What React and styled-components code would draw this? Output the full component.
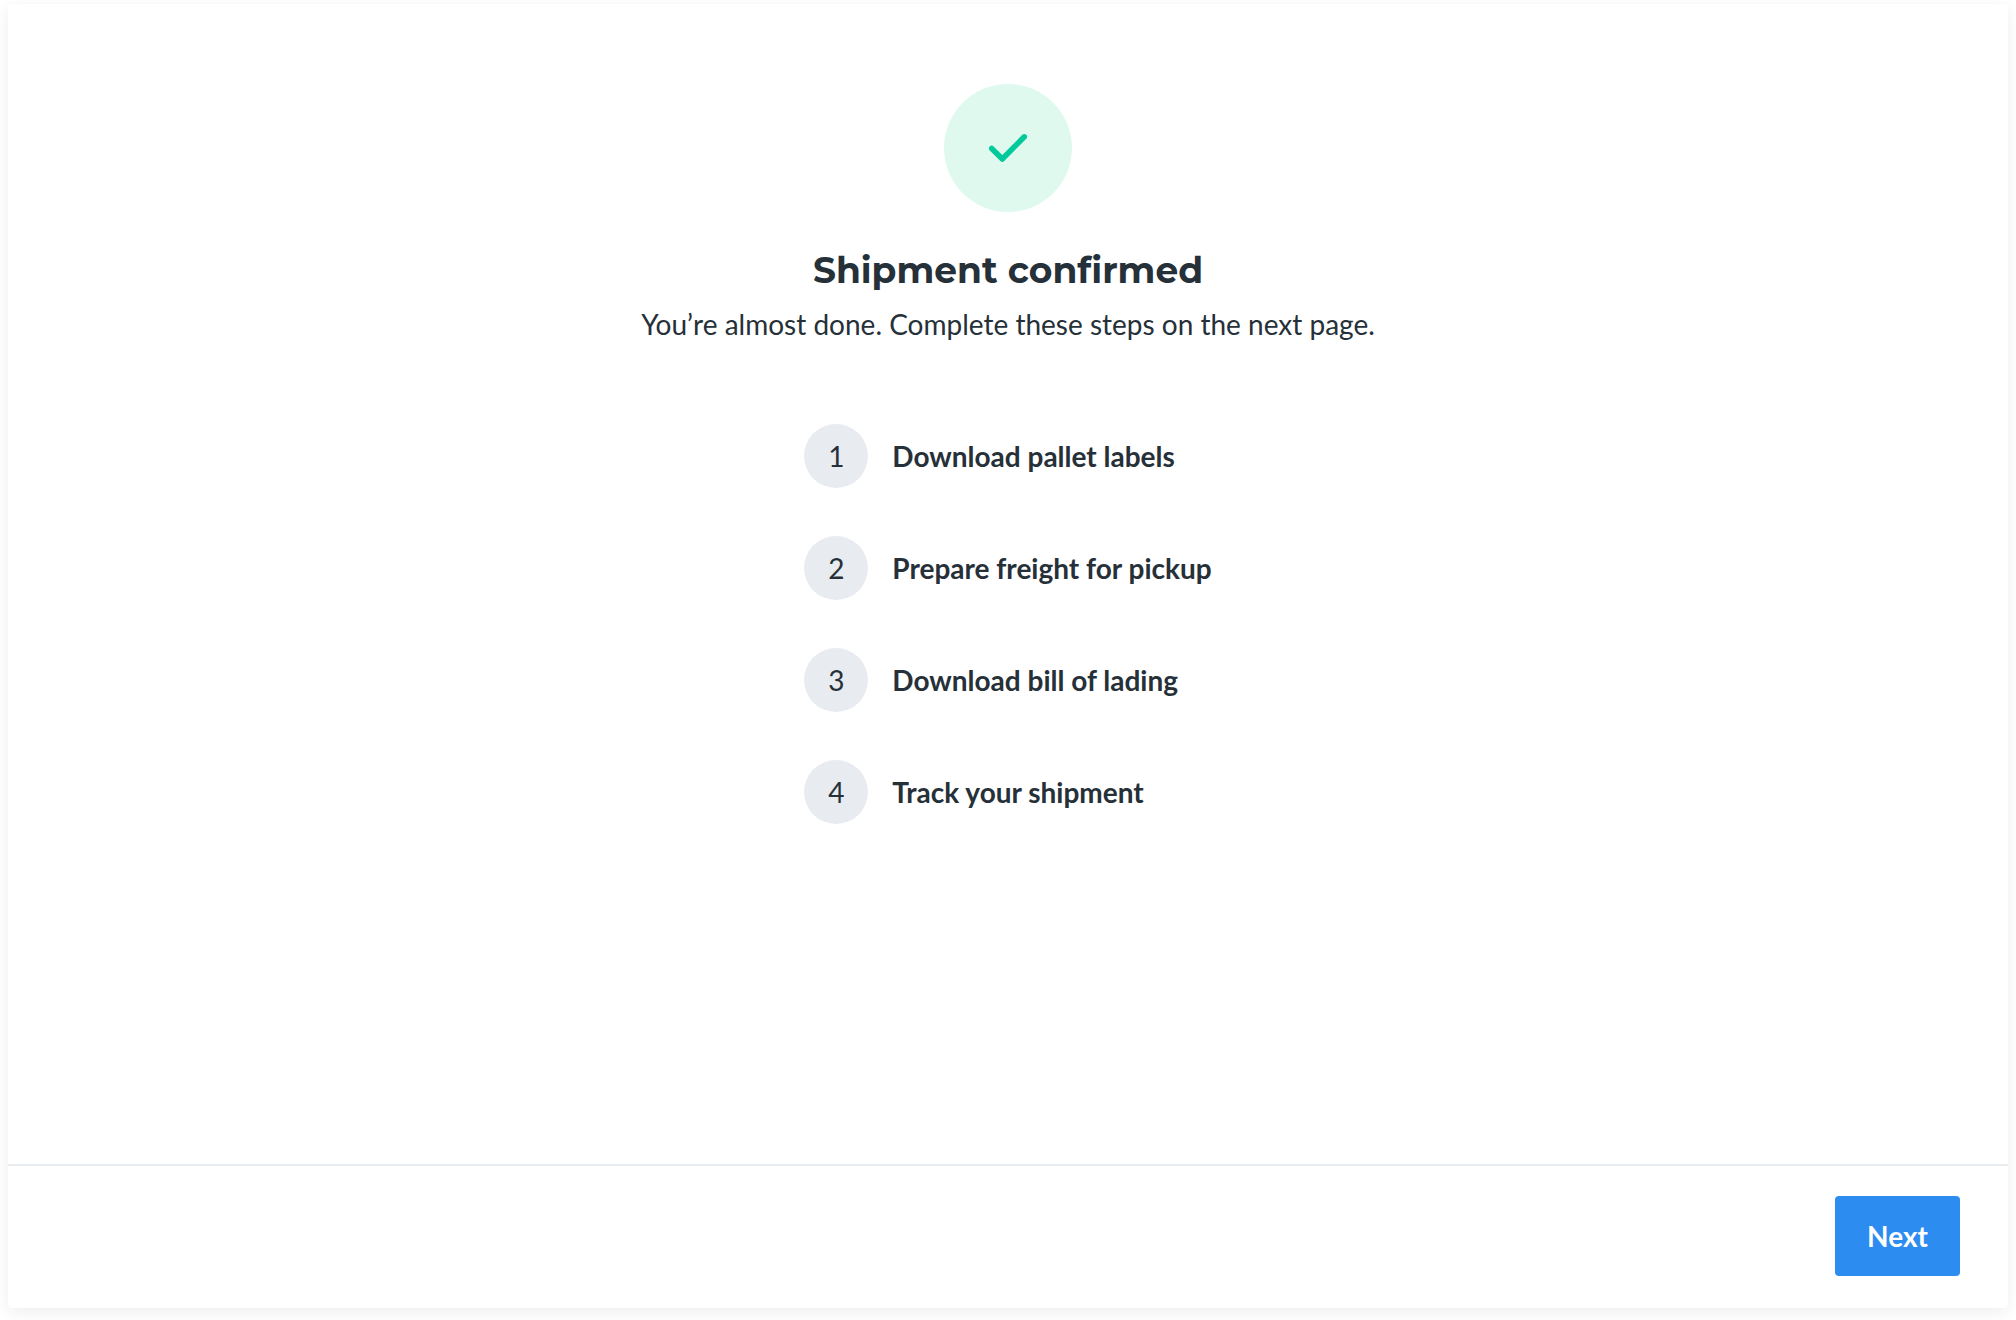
import React from 'react';
import styled, { createGlobalStyle } from 'styled-components';

const GlobalStyle = createGlobalStyle`
  * {
    box-sizing: border-box;
  }

  body {
    margin: 0;
    background-color: #fff;
    color: #263038;
    font-family: Lato, 'Open Sans', sans-serif;
    font-size: 28px;
    line-height: 40px;
    -webkit-font-smoothing: antialiased;
  }
`;

const Page = styled.div`
  display: flex;
  min-height: 100vh;
  padding: 4px 8px 12px;
`;

const Card = styled.main`
  display: flex;
  flex: 1;
  flex-direction: column;
  background-color: #fff;
  border-radius: 4px;
  box-shadow: 0 4px 16px rgba(0, 0, 0, 0.07);
`;

const Content = styled.section`
  display: flex;
  flex: 1;
  flex-direction: column;
  align-items: center;
  padding: 80px 48px;
`;

const SuccessBadge = styled.div`
  display: flex;
  align-items: center;
  justify-content: center;
  width: 128px;
  height: 128px;
  margin-bottom: 32px;
  border-radius: 50%;
  background-color: #dff9ef;
`;

const Title = styled.h1`
  margin: 0 0 8px;
  font-family: Montserrat, Inter, sans-serif;
  font-size: 36px;
  font-weight: 700;
  line-height: 52px;
  text-align: center;
`;

const Subtitle = styled.p`
  margin: 0 0 80px;
  text-align: center;
`;

const StepList = styled.ol`
  display: flex;
  flex-direction: column;
  gap: 48px;
  margin: 0;
  padding: 0;
  list-style: none;
`;

const Step = styled.li`
  display: flex;
  align-items: center;
  gap: 24px;
`;

const StepNumber = styled.span`
  display: flex;
  flex-shrink: 0;
  align-items: center;
  justify-content: center;
  width: 64px;
  height: 64px;
  border-radius: 50%;
  background-color: #e8ebf0;
`;

const StepLabel = styled.span`
  font-weight: 700;
`;

const Footer = styled.footer`
  display: flex;
  justify-content: flex-end;
  padding: 30px 48px 32px;
  border-top: 2px solid #e8edf1;
`;

const NextButton = styled.button`
  padding: 20px 32px;
  border: none;
  border-radius: 4px;
  background-color: #2d8cf0;
  color: #fff;
  font: inherit;
  font-weight: 700;
  cursor: pointer;

  &:hover {
    background-color: #227fe0;
  }
`;

const steps = [
  'Download pallet labels',
  'Prepare freight for pickup',
  'Download bill of lading',
  'Track your shipment',
];

const CheckIcon = () => (
  <svg width="48" height="48" viewBox="0 0 48 48" fill="none" aria-hidden="true">
    <path
      d="M7.7 24.5 18.3 35 40.3 12.8"
      stroke="#00c99b"
      strokeWidth="5.5"
      strokeLinecap="round"
      strokeLinejoin="round"
    />
  </svg>
);

const App = () => {
  return (
    <>
      <GlobalStyle />
      <Page>
        <Card>
          <Content>
            <SuccessBadge>
              <CheckIcon />
            </SuccessBadge>
            <Title>Shipment confirmed</Title>
            <Subtitle>You’re almost done. Complete these steps on the next page.</Subtitle>
            <StepList>
              {steps.map((label, index) => (
                <Step key={label}>
                  <StepNumber>{index + 1}</StepNumber>
                  <StepLabel>{label}</StepLabel>
                </Step>
              ))}
            </StepList>
          </Content>
          <Footer>
            <NextButton type="button">Next</NextButton>
          </Footer>
        </Card>
      </Page>
    </>
  );
};

export default App;
